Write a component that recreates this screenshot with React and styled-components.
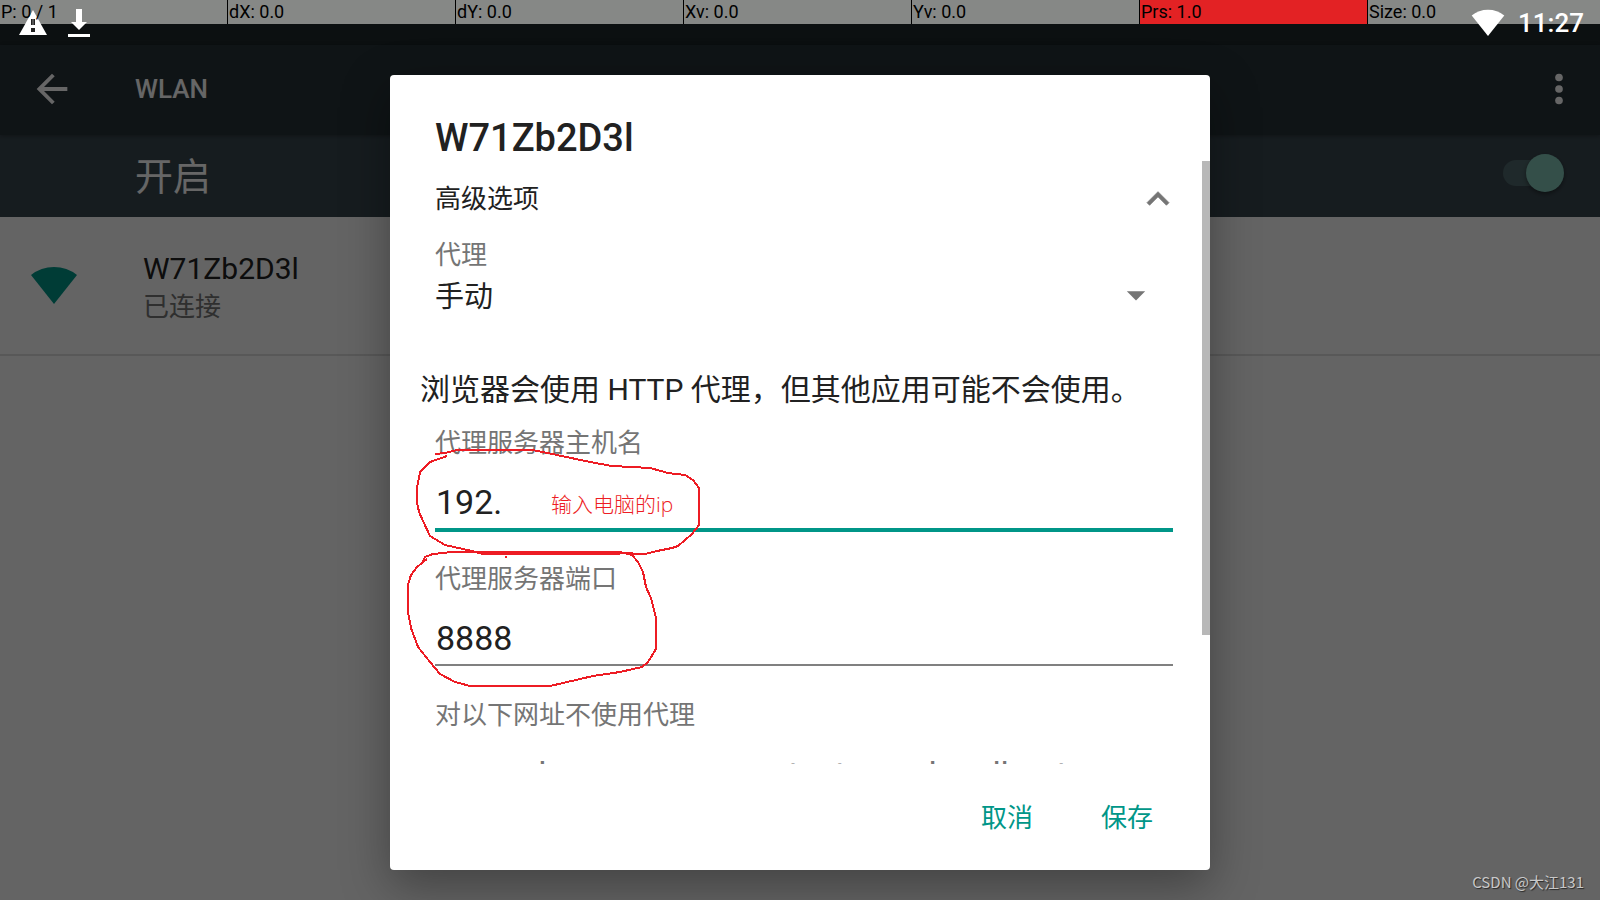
import React, { useState } from 'react'
import styled, { createGlobalStyle } from 'styled-components'

const GlobalStyle = createGlobalStyle`
*{
    box-sizing: border-box;
}
body{
    margin: 0;
    overflow: hidden;
    background: #fafafa;
    font-family: Roboto, 'Noto Sans CJK SC', sans-serif;
    color: #212121;
}
button, input, select{
    margin: 0;
    padding: 0;
    border: none;
    outline: none;
    background: none;
    border-radius: 0;
    color: inherit;
    font-family: inherit;
}
`;

const Page = styled.div`
position: relative;
min-height: 100vh;
`;

// pointer location strip
const PointerBar = styled.div`
position: absolute;
top: 0;
left: 0;
right: 0;
height: 24px;
display: flex;
`;

const PointerCell = styled.div`
flex: 0 0 14.25%;
padding-left: 1px;
border-right: 1px solid #000;
background: ${(props) => (props.$hot ? '#e32224' : '#868886')};
color: #000;
font-size: 18px;
line-height: 24px;
white-space: nowrap;

&:last-child{
    flex: 1;
    border-right: none;
}
span{
    position: relative;
    z-index: 3;
}
`;

const StatusIcons = styled.div`
position: absolute;
z-index: 2;
top: 0;
left: 0;
right: 0;
height: 45px;
padding: 0 16px;
display: flex;
align-items: center;
color: white;
font-size: 26px;
font-weight: 500;

.warning{
    margin-right: 16px;
}
.wifi{
    margin-left: auto;
    margin-right: 13px;
}
`;

const StatusBar = styled.div`
height: 45px;
background: #1e282b;
`;

const AppBar = styled.header`
position: relative;
display: flex;
align-items: center;
height: 90px;
padding: 0 18px 3px 29px;
background: #263238;
box-shadow: 0 1px 4px rgba(0, 0, 0, .3);
color: white;

h1{
    flex: 1;
    margin: 0 0 0 60px;
    font-size: 26px;
    font-weight: 500;
}
`;

const IconButton = styled.button`
display: flex;
width: 46px;
height: 46px;

svg{
    width: 46px;
    height: 46px;
    fill: currentColor;
}
`;

const SwitchBar = styled.label`
display: flex;
align-items: flex-start;
justify-content: space-between;
height: 82px;
padding: 19px 36px 0 135px;
background: #39474f;
color: white;
font-size: 38px;
line-height: 46px;
`;

const Switch = styled.input`
appearance: none;
position: relative;
width: 61px;
height: 38px;

&::before{
    content: '';
    position: absolute;
    left: 0;
    top: 6px;
    width: 54px;
    height: 26px;
    border-radius: 13px;
    background: #4e676b;
}
&::after{
    content: '';
    position: absolute;
    right: 0;
    top: 0;
    width: 38px;
    height: 38px;
    border-radius: 50%;
    background: #82c5b7;
    box-shadow: 0 2px 4px rgba(0, 0, 0, .4);
}
`;

const NetworkRow = styled.div`
display: flex;
align-items: center;
padding: 33px 30px 28px;
border-bottom: 2px solid #dcdcdc;
line-height: 38px;

svg{
    margin-right: 65px;
}
.name{
    font-size: 30px;
}
.state{
    font-size: 26px;
    color: #757575;
}
`;

const Backdrop = styled.div`
position: absolute;
inset: 0;
display: flex;
justify-content: center;
padding: 75px 16px 30px;
background: rgba(0, 0, 0, .6);
`;

const Dialog = styled.section`
display: flex;
flex-direction: column;
width: 100%;
max-width: 820px;
height: 100%;
border-radius: 4px;
background: white;
box-shadow: 0 16px 48px rgba(0, 0, 0, .35);

h2{
    margin: 0;
    padding: 41px 45px 1px;
    font-size: 38px;
    font-weight: 500;
    line-height: 44px;
}
`;

const ScrollFrame = styled.div`
position: relative;
flex: 1;
min-height: 0;
`;

const ScrollThumb = styled.div`
position: absolute;
top: 0;
right: 0;
width: 8px;
background: #b8b8b8;
`;

const ScrollBody = styled.div`
position: relative;
height: 100%;
overflow-y: auto;
scrollbar-width: none;
padding: 0 37px 0 45px;
`;

const AdvancedToggle = styled.button`
display: flex;
align-items: center;
justify-content: space-between;
width: calc(100% + 7px);
height: 76px;
font-size: 26px;
line-height: 36px;

svg{
    width: 44px;
    height: 44px;
    fill: #757575;
    stroke: #757575;
    stroke-width: .4px;
}
`;

const Label = styled.label`
display: block;
color: #757575;
font-size: 26px;
line-height: 36px;
`;

const SelectBox = styled.div`
position: relative;

select{
    appearance: none;
    display: block;
    width: 100%;
    height: 48px;
    font-size: 29px;
}
svg{
    position: absolute;
    top: 0;
    right: 15px;
    width: 44px;
    height: 44px;
    fill: #757575;
    pointer-events: none;
}
`;

const Note = styled.p`
margin: 48px 0 14px -15px;
font-size: 30px;
line-height: 42px;
`;

const Field = styled.div`
height: 136px;

input{
    display: block;
    box-sizing: content-box;
    width: 100%;
    height: 52px;
    padding-top: 15px;
    border-bottom: ${(props) => (props.$active ? '4px solid #009688' : '2px solid #808080')};
    font-size: 34px;
    text-indent: 1px;
}
input::placeholder{
    color: #757575;
    opacity: 1;
}
`;

const Marks = styled.svg`
position: absolute;
left: 10px;
top: 279px;
width: 310px;
height: 250px;
fill: none;
stroke: #ed1c24;
stroke-width: 2px;
pointer-events: none;
`;

const MarkText = styled.span`
position: absolute;
left: 161px;
top: 328px;
color: #ed1c24;
font-family: 'Open Sans', 'Noto Sans CJK SC', sans-serif;
font-size: 21px;
font-weight: 300;
line-height: 30px;
pointer-events: none;
`;

const Actions = styled.footer`
display: flex;
align-items: center;
justify-content: flex-end;
gap: 20px;
height: 106px;
padding: 2px 33px 0 0;
`;

const ActionButton = styled.button`
padding: 0 24px;
color: #009688;
font-size: 26px;
line-height: 60px;
`;

const Watermark = styled.div`
position: absolute;
right: 16px;
bottom: 7px;
color: #c8c8c8;
font-family: 'Noto Sans CJK SC', sans-serif;
font-size: 15px;
line-height: 22px;
text-shadow: 1px 1px 1px rgba(0, 0, 0, .6);
`;

const pointerCells = ['P: 0 / 1', 'dX: 0.0', 'dY: 0.0', 'Xv: 0.0', 'Yv: 0.0', 'Prs: 1.0', 'Size: 0.0']

const hostMark = '435,454 445,453 457,450 533,450 557,455 590,462 612,466 650,468 668,473 685,475 693,480 699,488 699,525 692,534 678,546 672,548 657,551 645,554 620,553 483,554 472,551 445,545 430,536 424,523 419,512 417,502 417,488 420,472 430,462 447,456'
const portMark = '427,559 422,563 425,557 433,554 452,552 620,552 632,555 638,562 643,572 646,587 651,598 656,618 656,649 648,662 642,667 620,672 593,676 550,686 470,686 455,682 440,674 430,662 418,647 411,628 408,612 408,585 411,575 417,567 427,559'

function WifiShape({ width, height, box = '0 0 48 38', color, className }) {
    return (
        <svg className={className} width={width} height={height} viewBox={box} fill={color}>
            <path d="M24 38L1 9Q11 1 24 1T47 9Z" />
        </svg>
    )
}

export default function App() {
    const [enabled, setEnabled] = useState(true)
    const [proxy, setProxy] = useState('manual')
    const [host, setHost] = useState('192.')
    const [port, setPort] = useState('8888')
    const [bypass, setBypass] = useState('')

    return (
        <Page>
            <GlobalStyle />
            <StatusBar />
            <AppBar>
                <IconButton type="button" aria-label="返回">
                    <svg viewBox="0 0 24 24"><path d="M20 11H7.83l5.59-5.59L12 4l-8 8 8 8 1.41-1.41L7.83 13H20v-2z" /></svg>
                </IconButton>
                <h1>WLAN</h1>
                <IconButton type="button" aria-label="更多">
                    <svg viewBox="0 0 24 24">
                        <circle cx="12" cy="6" r="2" />
                        <circle cx="12" cy="12" r="2" />
                        <circle cx="12" cy="18" r="2" />
                    </svg>
                </IconButton>
            </AppBar>
            <SwitchBar>
                开启
                <Switch type="checkbox" checked={enabled} onChange={(e) => setEnabled(e.target.checked)} />
            </SwitchBar>
            <NetworkRow>
                <WifiShape width={48} height={44} box="0 0 48 44" color="#009688" />
                <div>
                    <div className="name">W71Zb2D3l</div>
                    <div className="state">已连接</div>
                </div>
            </NetworkRow>

            <Backdrop>
                <Dialog role="dialog" aria-labelledby="ssid">
                    <h2 id="ssid">W71Zb2D3l</h2>
                    <ScrollFrame>
                        <ScrollBody>
                            <AdvancedToggle type="button">
                                高级选项
                                <svg viewBox="0 0 24 24"><path d="M12 8l-6 6 1.41 1.41L12 10.83l4.59 4.58L18 14z" /></svg>
                            </AdvancedToggle>
                            <Label htmlFor="proxy">代理</Label>
                            <SelectBox>
                                <select id="proxy" value={proxy} onChange={(e) => setProxy(e.target.value)}>
                                    <option value="manual">手动</option>
                                </select>
                                <svg viewBox="0 0 24 24"><path d="M7 10l5 5 5-5z" /></svg>
                            </SelectBox>
                            <Note>浏览器会使用 HTTP 代理，但其他应用可能不会使用。</Note>
                            <Field $active>
                                <Label htmlFor="host">代理服务器主机名</Label>
                                <input id="host" type="text" value={host} onChange={(e) => setHost(e.target.value)} />
                            </Field>
                            <Field>
                                <Label htmlFor="port">代理服务器端口</Label>
                                <input id="port" type="text" value={port} onChange={(e) => setPort(e.target.value)} />
                            </Field>
                            <Field>
                                <Label htmlFor="bypass">对以下网址不使用代理</Label>
                                <input
                                    id="bypass"
                                    type="text"
                                    placeholder="example.com,mycomp.test.com,localhost"
                                    value={bypass}
                                    onChange={(e) => setBypass(e.target.value)}
                                    />
                            </Field>
                            <Marks viewBox="400 440 310 250" shapeRendering="crispEdges">
                                <polyline points={hostMark} />
                                <polyline points={portMark} />
                                <path d="M482 553H620" strokeWidth="3" />
                                <path d="M505 557H507" />
                            </Marks>
                            <MarkText>输入电脑的ip</MarkText>
                        </ScrollBody>
                        <ScrollThumb style={{ height: `${(603 / 767) * 100}%` }} />
                    </ScrollFrame>
                    <Actions>
                        <ActionButton type="button">取消</ActionButton>
                        <ActionButton type="button">保存</ActionButton>
                    </Actions>
                </Dialog>
            </Backdrop>

            <PointerBar>
                {pointerCells.map((text) => (
                    <PointerCell key={text} $hot={text.startsWith('Prs')}><span>{text}</span></PointerCell>
                ))}
            </PointerBar>
            <StatusIcons>
                <svg className="warning" width="34" height="34" viewBox="0 0 34 34">
                    <path d="M17 4L31 29H3Z" fill="white" />
                    <path d="M15 13h4v6h-4zM15 22h4v4h-4z" fill="#222" />
                    <path d="M16 13h2v6h-2z" fill="#555" />
                </svg>
                <svg width="26" height="34" viewBox="0 0 26 34" fill="white">
                    <path d="M10 3h6v13h5l-8 8-8-8h5zM2 28h22v3H2z" />
                </svg>
                <WifiShape className="wifi" width={34} height={27} color="white" />
                <span>11:27</span>
            </StatusIcons>
            <Watermark>CSDN @大江131</Watermark>
        </Page>
    )
}
